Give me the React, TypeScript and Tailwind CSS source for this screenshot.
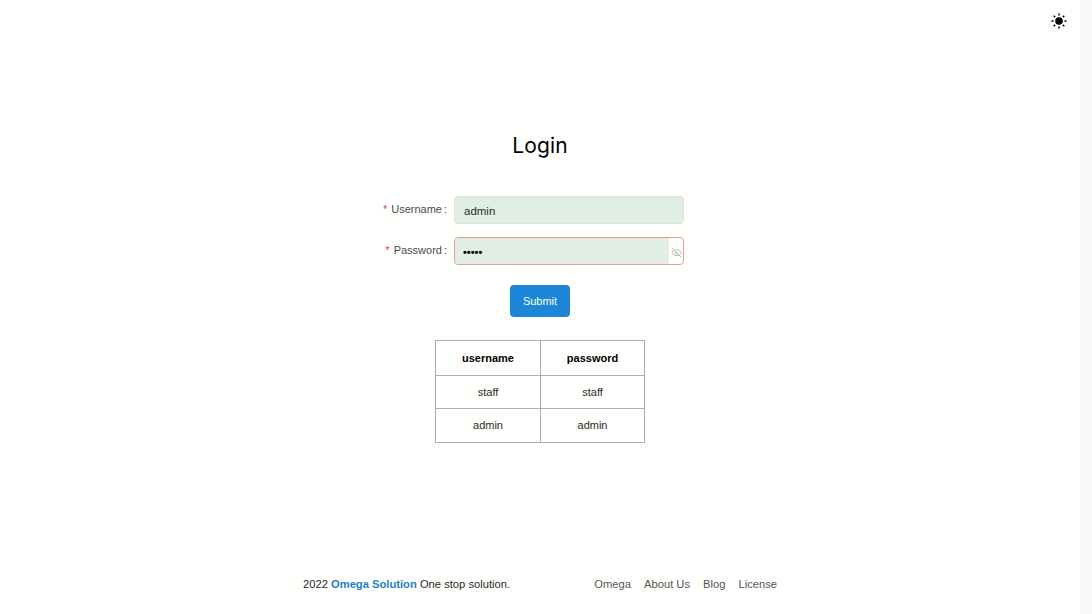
import React from "react";
import { EyeOff } from "lucide-react";

function Sun() {
  return (
    <svg width="16" height="16" viewBox="0 0 16 16" fill="#000" aria-hidden="true">
      <circle cx="8" cy="8" r="3.8" />
      <g stroke="#000" strokeWidth="1.5" strokeLinecap="butt">
        <path d="M8 0.5V2.5M8 13.5V15.5M0.5 8H2.5M13.5 8H15.5M2.7 2.7L4.1 4.1M11.9 11.9L13.3 13.3M2.7 13.3L4.1 11.9M11.9 4.1L13.3 2.7" />
      </g>
    </svg>
  );
}

function Field({ label, children }: { label: string; children: React.ReactNode }) {
  return (
    <div className="flex items-center h-[28px]">
      <label className="w-[77px] shrink-0 flex justify-end items-center text-[11px] text-[#4a4a48] pr-[7px] -mt-[2px]">
        <span className="text-[#d9405a] mr-[4px] text-[11px]">*</span>
        {label}
        <span className="ml-[2px]">:</span>
      </label>
      {children}
    </div>
  );
}

export default function App() {
  return (
    <div className="h-[614px] w-[1092px] overflow-hidden flex bg-[#fffffd] bg-[radial-gradient(circle_at_1px_1px,#fffbd0_0.6px,transparent_0.7px),radial-gradient(circle_at_5px_5px,#fffbd0_0.6px,transparent_0.7px)] bg-[size:8px_8px] font-['Liberation_Sans',Arial,sans-serif] text-[#2a2a26]">
      <div className="flex-1 flex flex-col min-w-0">
        <div className="flex justify-end h-[42px] pt-[13px] pr-[13px]">
          <Sun />
        </div>
        <main className="flex flex-col items-center">
          <h1 className="mt-[90px] text-[21px] leading-[28px] text-black font-['Inter',sans-serif] tracking-[0.1px]">Login</h1>
          <form className="mt-[36px] w-[307px] ml-[-19px] flex flex-col gap-[13px]">
            <Field label="Username">
              <div className="w-[230px] shrink-0 h-[28px] rounded-[4px] border border-[#d9e2de] bg-[#e0eee6] flex items-center pl-[9px] pt-[4px] text-[11.5px] text-[#2a2a26]">
                admin
              </div>
            </Field>
            <Field label="Password">
              <div className="w-[230px] shrink-0 h-[28px] rounded-[4px] border border-[#ee9a8c] bg-[#fffffd] flex items-center overflow-hidden">
                <div className="flex-1 h-full bg-[#e0eee6] flex items-center pl-[8px] pt-[3px] text-[11px] font-bold text-black">
                  •••••
                </div>
                <div className="w-[14px] h-full flex items-center justify-center pt-[2px]">
                  <EyeOff size={11} strokeWidth={1.5} className="text-[#999]" />
                </div>
              </div>
            </Field>
          </form>
          <button className="mt-[20px] w-[60px] h-[32px] rounded-[4px] bg-[#1c87d8] text-white text-[11px]">Submit</button>
          <table className="mt-[23px] w-[210px] border-collapse text-[11px] text-center table-fixed">
            <thead>
              <tr className="h-[35px]">
                <th className="border border-[#a6b2ac] font-bold text-black w-[105px]">username</th>
                <th className="border border-[#a6b2ac] font-bold text-black">password</th>
              </tr>
            </thead>
            <tbody>
              <tr className="h-[33px]">
                <td className="border border-[#a6b2ac]">staff</td>
                <td className="border border-[#a6b2ac]">staff</td>
              </tr>
              <tr className="h-[34px]">
                <td className="border border-[#a6b2ac]">admin</td>
                <td className="border border-[#a6b2ac]">admin</td>
              </tr>
            </tbody>
          </table>
        </main>
        <footer className="mt-auto mb-[23px] flex justify-center text-[11.2px] leading-[14px]">
          <div className="w-[474px] flex justify-between">
            <div className="text-[#2a2a26]">
              2022 <a className="font-bold text-[#1f7fd0]">Omega Solution</a> One stop solution.
            </div>
            <nav className="flex gap-[13px] text-[#555550]">
              <a>Omega</a>
              <a>About Us</a>
              <a>Blog</a>
              <a>License</a>
            </nav>
          </div>
        </footer>
      </div>
      <div className="w-[12px] shrink-0 bg-[#f8f7fa]" />
    </div>
  );
}
